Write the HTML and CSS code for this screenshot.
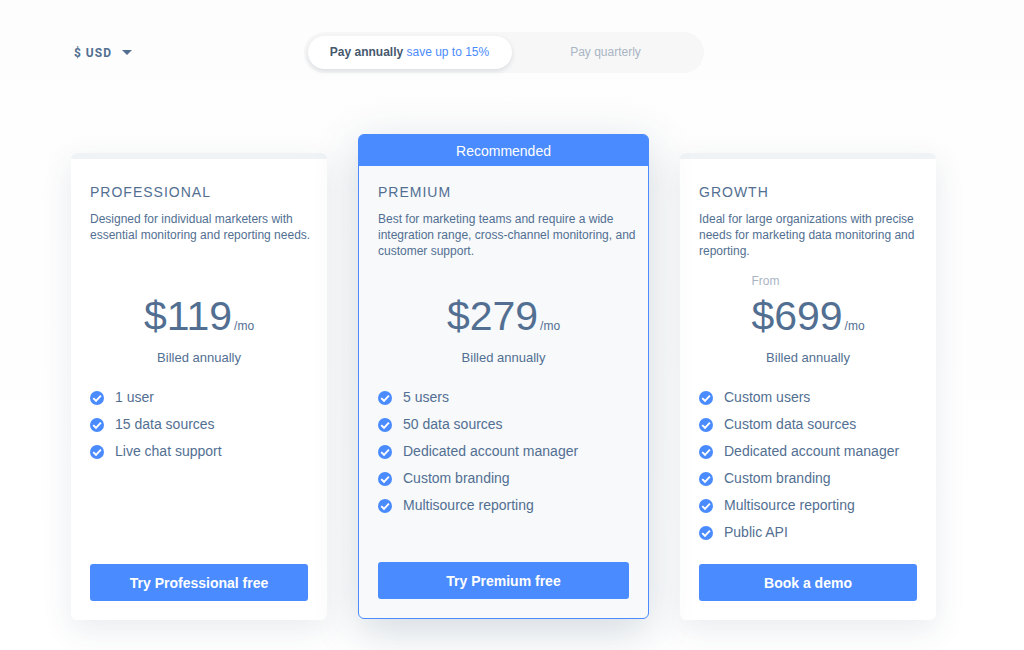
FILE: index.html
```html
<!DOCTYPE html>
<html lang="en">
<head>
  <meta charset="UTF-8" />
  <meta name="viewport" content="width=device-width, initial-scale=1.0" />
  <title>Pricing</title>
  <link rel="stylesheet" href="styles.css">
</head>
<body>
  <svg class="sprite" aria-hidden="true">
    <symbol id="check" viewBox="0 0 14 14">
      <circle cx="7" cy="7" r="7" fill="#4a8bff" />
      <path d="M3.2 7.1 6 9.8 10.9 4.7" fill="none" stroke="#fff" stroke-width="1.9" />
    </symbol>
  </svg>

  <main class="pricing">
    <form class="options">
      <div class="currency">
        <select name="currency" aria-label="Currency">
          <option>$ USD</option>
          <option>€ EUR</option>
          <option>£ GBP</option>
        </select>
        <svg class="arrow" viewBox="0 0 10 5" aria-hidden="true"><path d="M0 0h10L5 5z" /></svg>
      </div>
      <div class="period" role="radiogroup" aria-label="Billing period">
        <input type="radio" name="period" id="annually" checked>
        <label for="annually">Pay annually <span>save up to 15%</span></label>
        <input type="radio" name="period" id="quarterly">
        <label for="quarterly">Pay quarterly</label>
      </div>
    </form>

    <div class="plans">
      <section class="plan">
        <div class="plan-body">
          <h2>Professional</h2>
          <p class="desc">Designed for individual marketers with essential monitoring and reporting needs.</p>
          <div class="price">
            <p class="from"></p>
            <p class="amount">$119<small>/mo</small></p>
          </div>
          <p class="billed">Billed annually</p>
          <ul>
            <li><svg><use href="#check" /></svg>1 user</li>
            <li><svg><use href="#check" /></svg>15 data sources</li>
            <li><svg><use href="#check" /></svg>Live chat support</li>
          </ul>
          <button type="button">Try Professional free</button>
        </div>
      </section>

      <section class="plan recommended">
        <div class="ribbon">Recommended</div>
        <div class="plan-body">
          <h2>Premium</h2>
          <p class="desc">Best for marketing teams and require a wide integration range, cross-channel monitoring, and customer support.</p>
          <div class="price">
            <p class="from"></p>
            <p class="amount">$279<small>/mo</small></p>
          </div>
          <p class="billed">Billed annually</p>
          <ul>
            <li><svg><use href="#check" /></svg>5 users</li>
            <li><svg><use href="#check" /></svg>50 data sources</li>
            <li><svg><use href="#check" /></svg>Dedicated account manager</li>
            <li><svg><use href="#check" /></svg>Custom branding</li>
            <li><svg><use href="#check" /></svg>Multisource reporting</li>
          </ul>
          <button type="button">Try Premium free</button>
        </div>
      </section>

      <section class="plan">
        <div class="plan-body">
          <h2>Growth</h2>
          <p class="desc">Ideal for large organizations with precise needs for marketing data monitoring and reporting.</p>
          <div class="price">
            <p class="from">From</p>
            <p class="amount">$699<small>/mo</small></p>
          </div>
          <p class="billed">Billed annually</p>
          <ul>
            <li><svg><use href="#check" /></svg>Custom users</li>
            <li><svg><use href="#check" /></svg>Custom data sources</li>
            <li><svg><use href="#check" /></svg>Dedicated account manager</li>
            <li><svg><use href="#check" /></svg>Custom branding</li>
            <li><svg><use href="#check" /></svg>Multisource reporting</li>
            <li><svg><use href="#check" /></svg>Public API</li>
          </ul>
          <button type="button">Book a demo</button>
        </div>
      </section>
    </div>
  </main>
</body>
</html>
```
FILE: styles.css
```css
:root {
  --blue: #4a8bff;
  --text: #526f92;
  --muted: #a9b5c4;
  --line: #eff3f6;
}
* {
  margin: 0;
  padding: 0;
  box-sizing: border-box;
}
body {
  font-family: 'Liberation Sans', Arial, sans-serif;
  font-size: 14px;
  color: var(--text);
  background: linear-gradient(#fdfdfd, #fff);
  overflow-x: hidden;
}
.sprite {
  display: none;
}
.pricing {
  padding: 32px 88px 30px 71px;
}

/* currency and billing period */
.options {
  display: grid;
  grid-template-columns: 1fr 400px 1fr;
  align-items: center;
  margin-bottom: 61px;
}
.currency {
  position: relative;
  width: 64px;
}
.currency select {
  width: 100%;
  height: 22px;
  padding-left: 3px;
  border: none;
  background: none;
  appearance: none;
  font: bold 12px Roboto, sans-serif;
  letter-spacing: 1px;
  color: var(--text);
  cursor: pointer;
}
.currency .arrow {
  position: absolute;
  right: 3px;
  top: 8px;
  width: 10px;
  height: 5px;
  fill: var(--text);
  pointer-events: none;
}
.period {
  display: grid;
  grid-template-columns: 204px 1fr;
  padding: 4px;
  border-radius: 21px;
  background: #f7f7f7;
}
.period input {
  position: absolute;
  opacity: 0;
}
.period label {
  height: 33px;
  border-radius: 17px;
  font-size: 12px;
  line-height: 33px;
  text-align: center;
  color: var(--muted);
  cursor: pointer;
}
.period input:checked + label {
  background: #fff;
  box-shadow: 0 2px 5px rgba(60, 80, 110, 0.16);
  font-weight: bold;
  color: #46586e;
}
.period label span {
  font-weight: normal;
  color: var(--blue);
}

/* plans */
.plans {
  display: grid;
  grid-template-columns: 256fr 291fr 256fr;
  gap: 31px;
}
.plan {
  display: flex;
  flex-direction: column;
  margin-top: 19px;
  border-top: 6px solid var(--line);
  border-radius: 6px;
  background: #fff;
  box-shadow: 0 10px 30px rgba(50, 70, 110, 0.1);
}
.plan-body {
  flex: 1;
  display: flex;
  flex-direction: column;
  padding: 23px 19px 19px;
}
.recommended {
  position: relative;
  margin: 0 0 1px;
  border: 1px solid var(--blue);
  background: #f7f9fb;
  box-shadow: 0 12px 44px rgba(50, 80, 110, 0.22);
}
.ribbon {
  height: 31px;
  line-height: 33px;
  border-radius: 4px 4px 0 0;
  background: var(--blue);
  text-align: center;
  color: #fff;
}
.recommended .plan-body {
  padding-top: 16px;
}
.plan h2 {
  margin-bottom: 9px;
  font-size: 14px;
  font-weight: normal;
  line-height: 20px;
  letter-spacing: 1px;
  text-transform: uppercase;
}
.desc {
  min-height: 48px;
  margin-right: -12px;
  font-size: 12px;
  line-height: 16px;
}
.price {
  align-self: center;
  margin-top: 14px;
}
.from {
  height: 16px;
  font-size: 12px;
  line-height: 16px;
  color: var(--muted);
}
.amount {
  height: 40px;
  margin-top: 7px;
  font-size: 41px;
  line-height: 40px;
}
.amount small {
  margin-left: 2px;
  font-size: 12px;
}
.billed {
  margin-top: 14px;
  font-size: 13px;
  line-height: 16px;
  text-align: center;
}
.plan ul {
  flex: 1;
  margin: 18px 0;
  list-style: none;
}
.plan li {
  display: flex;
  align-items: center;
  gap: 11px;
  line-height: 27px;
}
.plan li svg {
  width: 14px;
  height: 14px;
}
.plan button {
  height: 37px;
  border: none;
  border-radius: 3px;
  background: var(--blue);
  font: bold 14px 'Liberation Sans', Arial, sans-serif;
  color: #fff;
  cursor: pointer;
}
```
